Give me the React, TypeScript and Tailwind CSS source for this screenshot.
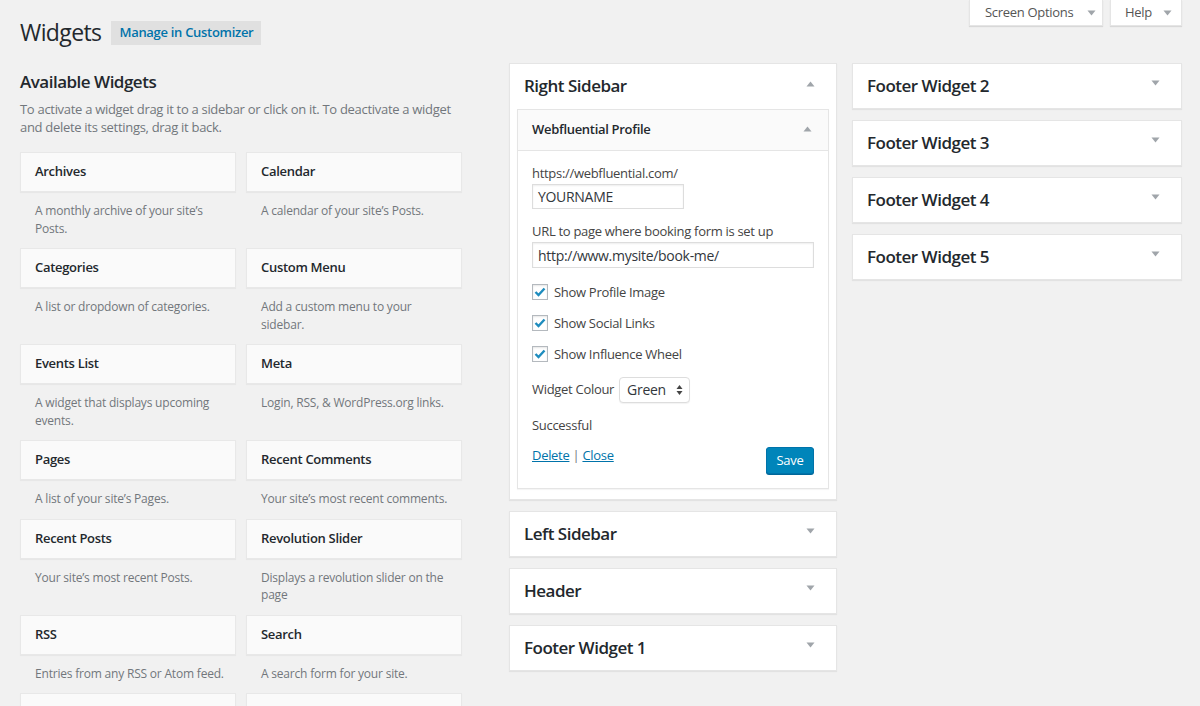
import React from "react";

const Down = () => (
  <svg width="9" height="6" viewBox="0 0 9 6" className="shrink-0">
    <path d="M0.5 0.5 L8.5 0.5 L4.5 5.5 Z" fill="#a0a5aa" />
  </svg>
);
const Up = () => (
  <svg width="9" height="6" viewBox="0 0 9 6" className="shrink-0">
    <path d="M0.5 5.5 L8.5 5.5 L4.5 0.5 Z" fill="#a0a5aa" />
  </svg>
);

const widgets: [string, string][] = [
  ["Archives", "A monthly archive of your site\u2019s Posts."],
  ["Calendar", "A calendar of your site\u2019s Posts."],
  ["Categories", "A list or dropdown of categories."],
  ["Custom Menu", "Add a custom menu to your sidebar."],
  ["Events List", "A widget that displays upcoming events."],
  ["Meta", "Login, RSS, & WordPress.org links."],
  ["Pages", "A list of your site\u2019s Pages."],
  ["Recent Comments", "Your site\u2019s most recent comments."],
  ["Recent Posts", "Your site\u2019s most recent Posts."],
  ["Revolution Slider", "Displays a revolution slider on the page"],
  ["RSS", "Entries from any RSS or Atom feed."],
  ["Search", "A search form for your site."],
  ["", ""],
  ["", ""],
];

const Check = ({ label }: { label: string }) => (
  <div className="flex items-center h-[16px]">
    <div className="w-[16px] h-[16px] border border-[#b4b9be] bg-white shadow-[inset_0_1px_2px_rgba(0,0,0,0.1)] flex items-center justify-center">
      <svg width="12" height="10" viewBox="0 0 12 10">
        <path d="M1.5 5 L4.5 8 L10.5 1.5" stroke="#1e8cbe" strokeWidth="2.4" fill="none" />
      </svg>
    </div>
    <span className="ml-[6px] text-[13px] leading-[17px] text-[#444]">{label}</span>
  </div>
);

const Panel = ({ title }: { title: string }) => (
  <div className="h-[46px] bg-white shadow-[0_1px_1px_rgba(0,0,0,0.06)] border border-[#e5e5e5] flex items-center justify-between pl-[14px] pr-[21px]">
    <span className="text-[17px] tracking-[-0.5px] font-semibold text-[#23282d]">{title}</span>
    <div className="-mt-[6px]">
      <Down />
    </div>
  </div>
);

export default function App() {
  return (
    <div
      className="relative w-[1200px] h-[706px] overflow-hidden bg-[#f1f1f1] text-[#444] tracking-[-0.3px]"
      style={{ fontFamily: "'Open Sans', sans-serif" }}
    >
      <div className="absolute top-0 right-[18px] flex gap-[7px]">
        <div className="h-[26px] w-[134px] bg-white shadow-[0_1px_1px_rgba(0,0,0,0.1)] border-x border-b border-[#e5e5e5] flex items-center pl-[15px] gap-[14px]">
          <span className="text-[13px] text-[#555]">Screen Options</span>
          <Down />
        </div>
        <div className="h-[26px] w-[72px] bg-white shadow-[0_1px_1px_rgba(0,0,0,0.1)] border-x border-b border-[#e5e5e5] flex items-center pl-[14px] gap-[11px]">
          <span className="text-[13px] text-[#555]">Help</span>
          <Down />
        </div>
      </div>

      <div className="flex items-center pt-[18px] pl-[20px] h-[47px]">
        <h1 className="text-[23px] leading-[29px] text-[#23282d] font-normal tracking-[-0.6px]">Widgets</h1>
        <div className="ml-[10px] h-[24px] px-[8px] bg-[#e0e0e0] flex items-center text-[13px] font-semibold text-[#0073aa]">
          Manage in Customizer
        </div>
      </div>

      <div className="flex mt-[16px] pl-[20px]">
        <div className="w-[442px] shrink-0">
          <h2 className="mt-[7px] text-[17px] leading-[24px] font-semibold text-[#23282d] tracking-[-0.5px]">Available Widgets</h2>
          <p className="mt-[6px] text-[13px] leading-[18px] text-[#72777c] w-[440px]">
            To activate a widget drag it to a sidebar or click on it. To deactivate a widget and delete its settings, drag it back.
          </p>
          <div className="grid grid-cols-2 gap-x-[10px] mt-[16px]">
            {widgets.map(([t, d], i) => (
              <div key={i}>
                <div className="h-[40px] bg-[#fafafa] border border-[#e8e8e8] shadow-[0_1px_1px_rgba(0,0,0,0.04)] flex items-center px-[14px] text-[13px] font-semibold text-[#23282d]">
                  {t}
                </div>
                <div className="pl-[15px] pr-[12px] pt-[10px] pb-[11px] text-[12px] tracking-[-0.2px] leading-[17.5px] text-[#72777c]">{d}</div>
              </div>
            ))}
          </div>
        </div>

        <div className="ml-[47px] w-[328px] shrink-0 flex flex-col gap-[11px]">
          <div className="bg-white border border-[#e5e5e5] shadow-[0_1px_1px_rgba(0,0,0,0.06)] px-[7px] pb-[10px]">
            <div className="h-[45px] flex items-center justify-between pl-[7px] pr-[14px]">
              <span className="text-[17px] font-semibold text-[#23282d] tracking-[-0.5px] -mt-[1px]">Right Sidebar</span>
              <div className="-mt-[6px]">
                <Up />
              </div>
            </div>
            <div className="border border-[#e5e5e5] shadow-[0_1px_1px_rgba(0,0,0,0.04)]">
              <div className="h-[41px] bg-[#fafafa] flex items-center justify-between pl-[14px] pr-[16px] border-b border-[#e5e5e5]">
                <span className="text-[13px] font-semibold text-[#23282d]">Webfluential Profile</span>
                <div className="-mt-[2px]">
                  <Up />
                </div>
              </div>
              <div className="bg-white px-[14px] pb-[14px] flex flex-col">
                <div className="mt-[14px] text-[13px] leading-[17px] text-[#444]">https://webfluential.com/</div>
                <div className="mt-[2px] w-[152px] h-[25px] border border-[#ddd] shadow-[inset_0_1px_2px_rgba(0,0,0,0.07)] flex items-center pl-[5px] text-[14px] text-[#32373c]">
                  YOURNAME
                </div>
                <div className="mt-[14px] text-[13px] leading-[17px] text-[#444]">URL to page where booking form is set up</div>
                <div className="mt-[2px] w-[282px] h-[26px] border border-[#ddd] shadow-[inset_0_1px_2px_rgba(0,0,0,0.07)] flex items-center pl-[5px] text-[14px] text-[#32373c]">
                  http://www.mysite/book-me/
                </div>
                <div className="mt-[16px] flex flex-col gap-[15px]">
                  <Check label="Show Profile Image" />
                  <Check label="Show Social Links" />
                  <Check label="Show Influence Wheel" />
                </div>
                <div className="mt-[15px] flex items-center h-[25px]">
                  <span className="text-[13px] text-[#444]">Widget Colour</span>
                  <div className="ml-[5px] w-[71px] h-[26px] border border-[#ddd] rounded-[4px] bg-white flex items-center justify-between pl-[7px] pr-[6px] shadow-[0_1px_1px_rgba(0,0,0,0.05)]">
                    <span className="text-[14px] text-[#32373c]">Green</span>
                    <svg width="7" height="12" viewBox="0 0 7 12">
                      <path d="M0.5 5 L6.5 5 L3.5 1 Z" fill="#444" />
                      <path d="M0.5 7 L6.5 7 L3.5 11 Z" fill="#444" />
                    </svg>
                  </div>
                </div>
                <div className="mt-[15px] text-[13px] leading-[17px] text-[#444]">Successful</div>
                <div className="mt-[13px] flex items-start justify-between h-[27px]">
                  <div className="text-[13px] leading-[17px]">
                    <span className="text-[#0073aa] underline">Delete</span>
                    <span className="text-[#72777c]"> | </span>
                    <span className="text-[#0073aa] underline">Close</span>
                  </div>
                  <div className="h-[27px] w-[48px] justify-center bg-[#0085ba] border border-[#0073aa] rounded-[3px] shadow-[0_1px_0_#006799] flex items-center text-[13px] text-white">
                    Save
                  </div>
                </div>
              </div>
            </div>
          </div>
          <Panel title="Left Sidebar" />
          <Panel title="Header" />
          <Panel title="Footer Widget 1" />
        </div>

        <div className="ml-[15px] w-[330px] shrink-0 flex flex-col gap-[11px]">
          <Panel title="Footer Widget 2" />
          <Panel title="Footer Widget 3" />
          <Panel title="Footer Widget 4" />
          <Panel title="Footer Widget 5" />
        </div>
      </div>
    </div>
  );
}
